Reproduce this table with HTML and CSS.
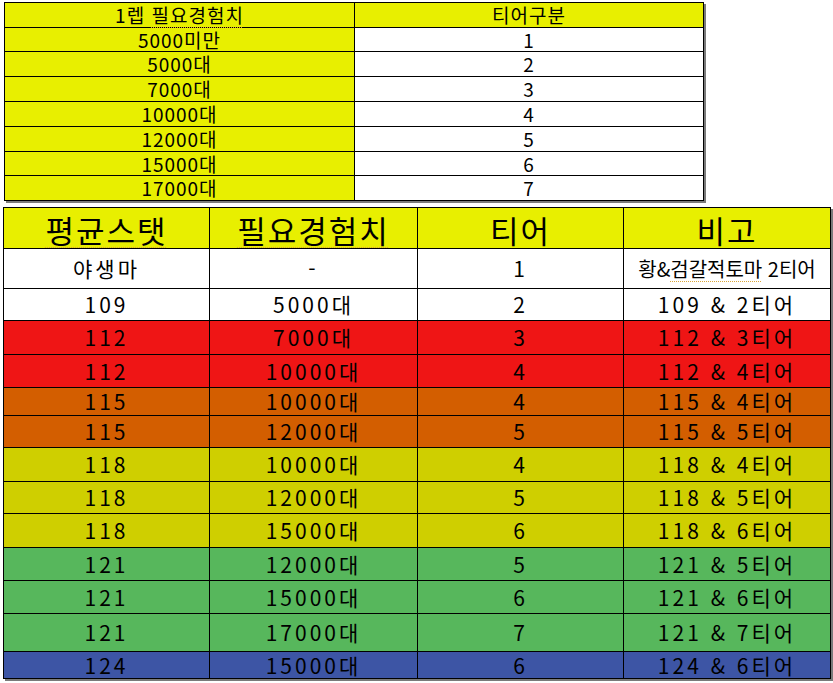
FILE: index.html
```html
<!DOCTYPE html>
<html lang="ko">
<head>
<meta charset="utf-8">
<title>티어구분</title>
<link rel="stylesheet" href="styles.css">
</head>
<body>
<div class="sheet">
  <div class="grid top">
    <div class="c y"><span>1렙 <span class="spell">필요경험치</span></span></div><div class="c y">티어구분</div>
    <div class="c y">5000미만</div><div class="c w">1</div>
    <div class="c y">5000대</div><div class="c w">2</div>
    <div class="c y">7000대</div><div class="c w">3</div>
    <div class="c y">10000대</div><div class="c w">4</div>
    <div class="c y">12000대</div><div class="c w">5</div>
    <div class="c y">15000대</div><div class="c w">6</div>
    <div class="c y">17000대</div><div class="c w">7</div>
  </div>

  <div class="grid bottom">
    <div class="c y h"><span class="spell">평균스탯</span></div><div class="c y h"><span class="spell">필요경험치</span></div><div class="c y h">티어</div><div class="c y h">비고</div>

    <div class="c w d">야생마</div><div class="c w d">-</div><div class="c w d">1</div><div class="c w note"><span>황&amp;<span class="spell">검갈적토마</span> 2티어</span></div>
    <div class="c w d">109</div><div class="c w d">5000대</div><div class="c w d">2</div><div class="c w d">109 &amp; 2티어</div>

    <div class="c r d">112</div><div class="c r d">7000대</div><div class="c r d">3</div><div class="c r d">112 &amp; 3티어</div>
    <div class="c r d">112</div><div class="c r d">10000대</div><div class="c r d">4</div><div class="c r d">112 &amp; 4티어</div>

    <div class="c o d">115</div><div class="c o d">10000대</div><div class="c o d">4</div><div class="c o d">115 &amp; 4티어</div>
    <div class="c o d">115</div><div class="c o d">12000대</div><div class="c o d">5</div><div class="c o d">115 &amp; 5티어</div>

    <div class="c v d">118</div><div class="c v d">10000대</div><div class="c v d">4</div><div class="c v d">118 &amp; 4티어</div>
    <div class="c v d">118</div><div class="c v d">12000대</div><div class="c v d">5</div><div class="c v d">118 &amp; 5티어</div>
    <div class="c v d">118</div><div class="c v d">15000대</div><div class="c v d">6</div><div class="c v d">118 &amp; 6티어</div>

    <div class="c g d">121</div><div class="c g d">12000대</div><div class="c g d">5</div><div class="c g d">121 &amp; 5티어</div>
    <div class="c g d">121</div><div class="c g d">15000대</div><div class="c g d">6</div><div class="c g d">121 &amp; 6티어</div>
    <div class="c g d">121</div><div class="c g d">17000대</div><div class="c g d">7</div><div class="c g d">121 &amp; 7티어</div>

    <div class="c b d">124</div><div class="c b d">15000대</div><div class="c b d">6</div><div class="c b d">124 &amp; 6티어</div>
  </div>
</div>
</body>
</html>
```

FILE: styles.css
```css
html, body {
  margin: 0;
  padding: 0;
  background: #ffffff;
}

body {
  font-family: "Noto Sans CJK KR", "Liberation Sans", sans-serif;
  color: #000;
  width: 833px;
  height: 683px;
  overflow: hidden;
}

.sheet {
  display: flex;
  flex-direction: column;
  align-items: flex-start;
}

.grid {
  display: grid;
  background: #000;
  padding: 1px;
  gap: 1px;
  box-shadow: 2px 2px 0 #7a7a7a;
}

.top {
  margin: 2px 0 0 4px;
  grid-template-columns: 349px 348px;
  grid-template-rows: 24px 23px 24px 24px 24px 24px 23px 24px;
}

.bottom {
  margin: 6px 0 0 3px;
  grid-template-columns: 205px 207px 205px 206px;
  grid-template-rows: 40px 39px 31px 33px 32px 27px 31px 33px 31px 33px 32px 32px 37px 26px;
}

.c {
  display: flex;
  align-items: center;
  justify-content: center;
  white-space: nowrap;
  min-height: 0;
}

.top .c {
  font-size: 19px;
  line-height: 19px;
  letter-spacing: 1px;
  padding-bottom: 1px;
}

.bottom .h {
  font-size: 31px;
  font-weight: 400;
  line-height: 31px;
  letter-spacing: 2px;
  padding-top: 2px;
}

.bottom .d {
  font-size: 21px;
  line-height: 21px;
  letter-spacing: 3px;
}

.bottom .note {
  font-size: 20px;
  line-height: 20px;
  letter-spacing: 0;
}

.spell {
  text-decoration: underline dotted #d9a43a;
  text-decoration-thickness: 1px;
  text-underline-offset: 4px;
}

.y { background: #e8ef00; }
.w { background: #ffffff; }
.r { background: #ef1515; }
.o { background: #d35e00; }
.v { background: #cfcf00; }
.g { background: #57b75c; }
.b { background: #3d55a5; }
```
